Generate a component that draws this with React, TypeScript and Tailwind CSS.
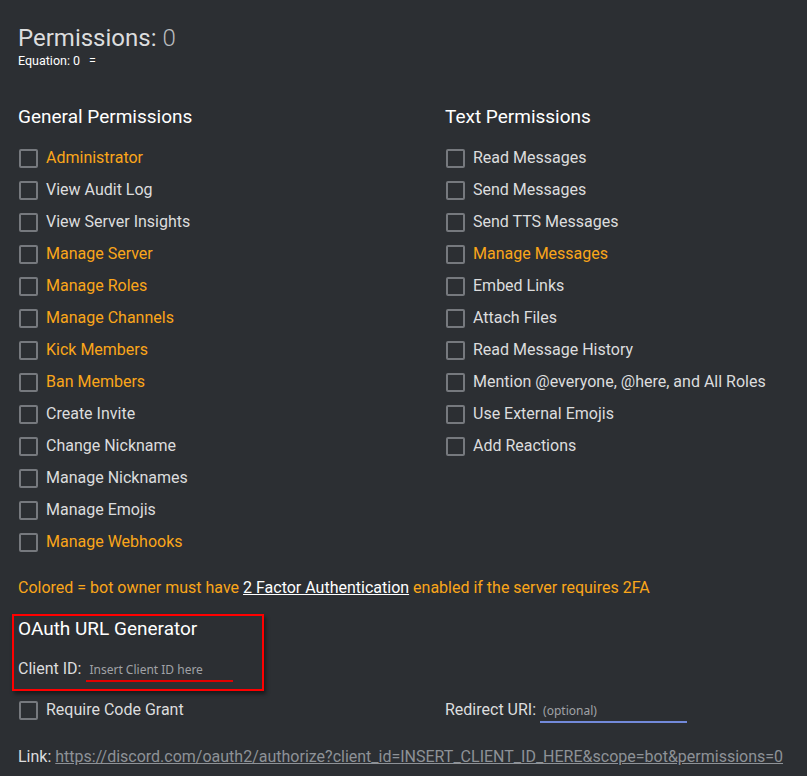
const GENERAL: [string, boolean][] = [
  ['Administrator', true],
  ['View Audit Log', false],
  ['View Server Insights', false],
  ['Manage Server', true],
  ['Manage Roles', true],
  ['Manage Channels', true],
  ['Kick Members', true],
  ['Ban Members', true],
  ['Create Invite', false],
  ['Change Nickname', false],
  ['Manage Nicknames', false],
  ['Manage Emojis', false],
  ['Manage Webhooks', true],
];

const TEXT: [string, boolean][] = [
  ['Read Messages', false],
  ['Send Messages', false],
  ['Send TTS Messages', false],
  ['Manage Messages', true],
  ['Embed Links', false],
  ['Attach Files', false],
  ['Read Message History', false],
  ['Mention @everyone, @here, and All Roles', false],
  ['Use External Emojis', false],
  ['Add Reactions', false],
];

function Check({ label, colored }: { label: string; colored?: boolean }) {
  return (
    <label className="flex items-center h-[32px] cursor-pointer">
      <span className="w-[19px] h-[19px] border-2 border-[#76797e] rounded-[2px] shrink-0 ml-px" />
      <span className={`ml-[8px] text-[16px] leading-[24px] ${colored ? 'text-[#faa61a]' : 'text-[#dcddde]'}`}>
        {label}
      </span>
    </label>
  );
}

function Column({ title, items }: { title: string; items: [string, boolean][] }) {
  return (
    <div>
      <h3 className="text-[19px] leading-[24px] text-white">{title}</h3>
      <div className="mt-[13px]">
        {items.map(([label, colored]) => (
          <Check key={label} label={label} colored={colored} />
        ))}
      </div>
    </div>
  );
}

export default function App() {
  return (
    <div className="min-h-[776px] bg-[#2c2f33] pl-[18px] pt-[24px] font-['Roboto',sans-serif] text-[#dcddde] overflow-hidden">
      <h1 className="text-[24px] leading-[28px] text-[#dcddde]">
        Permissions: <span className="font-light text-[#b9bbbe]">0</span>
      </h1>
      <p className="mt-[1px] text-[12.5px] leading-[16px] text-white">
        Equation: 0<span className="ml-[9px]">=</span>
      </p>

      <div className="mt-[36px] grid grid-cols-[427px_1fr]">
        <Column title="General Permissions" items={GENERAL} />
        <Column title="Text Permissions" items={TEXT} />
      </div>

      <p className="mt-[18px] text-[16px] leading-[24px] text-[#faa61a]">
        Colored = bot owner must have{' '}
        <a className="text-white underline" href="#">2 Factor Authentication</a> enabled if the server requires 2FA
      </p>

      <div className="mt-[14px] ml-[-6px] w-[252px] h-[77px] border-2 border-[#ff0000] pl-[4px] pt-px shadow-[2px_3px_4px_rgba(0,0,0,0.45)]">
        <h3 className="text-[19px] leading-[24px] text-white">OAuth URL Generator</h3>
        <div className="mt-[16px] flex items-center h-[24px]">
          <span className="text-[16px] text-[#dcddde]">Client ID:</span>
          <input
            placeholder="Insert Client ID here"
            className="ml-[5px] w-[147px] h-[26px] pt-[2px] pl-[3px] bg-transparent border-b-2 border-[#e00000] outline-none text-[12px] font-['Noto_Sans',sans-serif] placeholder:text-[#a0a2a6]"
          />
        </div>
      </div>

      <div className="mt-[3px] grid grid-cols-[427px_1fr]">
        <Check label="Require Code Grant" />
        <div className="flex items-center h-[32px]">
          <span className="text-[16px] text-[#dcddde]">Redirect URI:</span>
          <input
            placeholder="(optional)"
            className="ml-[4px] w-[147px] h-[26px] pt-[3px] pl-[3px] bg-transparent border-b-2 border-[#7289da] outline-none text-[12px] font-['Noto_Sans',sans-serif] placeholder:text-[#a0a2a6]"
          />
        </div>
      </div>

      <p className="mt-[19px] text-[16px] leading-[24px] whitespace-nowrap text-[#dcddde]">
        Link:{' '}
        <a className="text-[#8e9297] underline" href="#">
          https://discord.com/oauth2/authorize?client_id=INSERT_CLIENT_ID_HERE&amp;scope=bot&amp;permissions=0
        </a>
      </p>
    </div>
  );
}
